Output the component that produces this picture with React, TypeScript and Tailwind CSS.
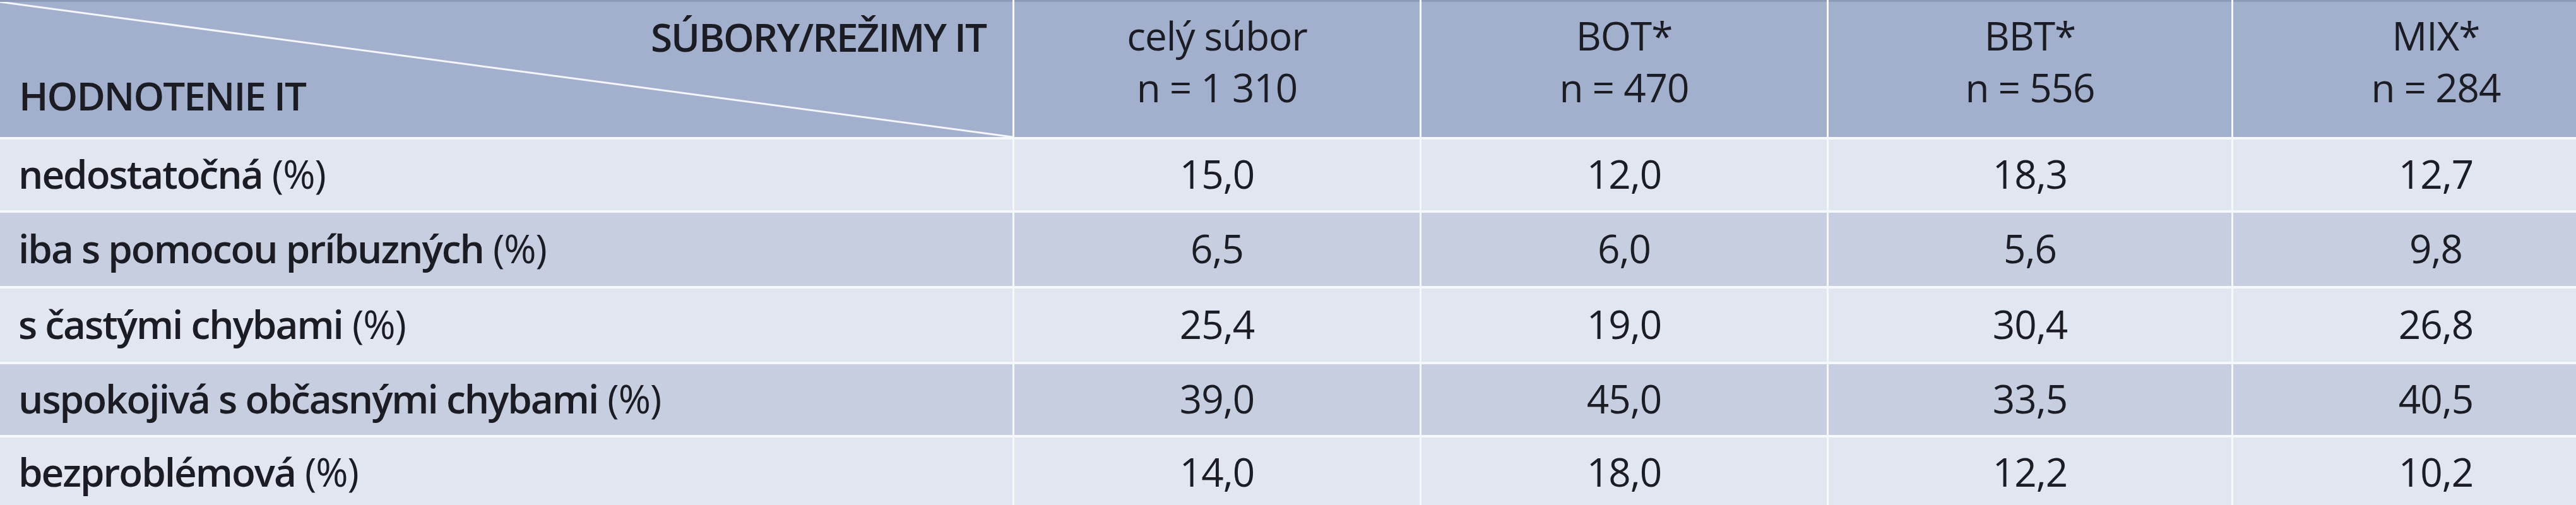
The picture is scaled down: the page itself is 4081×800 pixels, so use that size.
import React from 'react';

type Row = {
  label: string;
  values: string[];
};

const columns = [
  { title: 'celý súbor', n: 'n = 1 310' },
  { title: 'BOT*', n: 'n = 470' },
  { title: 'BBT*', n: 'n = 556' },
  { title: 'MIX*', n: 'n = 284' },
];

const rows: Row[] = [
  { label: 'nedostatočná', values: ['15,0', '12,0', '18,3', '12,7'] },
  { label: 'iba s pomocou príbuzných', values: ['6,5', '6,0', '5,6', '9,8'] },
  { label: 's častými chybami', values: ['25,4', '19,0', '30,4', '26,8'] },
  { label: 'uspokojivá s občasnými chybami', values: ['39,0', '45,0', '33,5', '40,5'] },
  { label: 'bezproblémová', values: ['14,0', '18,0', '12,2', '10,2'] },
];

export default function App() {
  return (
    <div className="w-[4081px] h-[800px] overflow-hidden bg-[#f7f8fc] font-['Open_Sans','Noto_Sans',sans-serif] text-[62px] tracking-[-1px] text-[#1b1c24]">
      <div className="grid w-[4180px] grid-cols-[1604px_642px_642px_638px_642px] grid-rows-[217px_112px_116px_116px_112px_112px] gap-x-[3px] gap-y-[4px]">
        {/* header */}
        <div className="relative flex flex-col justify-between border-t-[3px] border-[#8d9ab8] bg-[#a3b0cd] pt-[24px] pb-[35px] leading-none">
          <svg
            className="absolute inset-0 h-full w-full"
            viewBox="0 0 100 100"
            preserveAspectRatio="none"
          >
            <line
              x1="0"
              y1="0"
              x2="100"
              y2="100"
              stroke="#f4f6fb"
              strokeWidth="3"
              vectorEffect="non-scaling-stroke"
            />
          </svg>
          <div className="relative pr-[42px] text-right font-semibold tracking-[-2px]">SÚBORY/REŽIMY IT</div>
          <div className="relative pl-[30px] font-semibold tracking-[-2px]">HODNOTENIE IT</div>
        </div>
        {columns.map((col) => (
          <div
            key={col.title}
            className="border-t-[3px] border-[#8d9ab8] bg-[#a3b0cd] pt-[12px] text-center leading-[82px]"
          >
            <div>{col.title}</div>
            <div>{col.n}</div>
          </div>
        ))}

        {/* body */}
        {rows.map((row, i) => {
          const bg = i % 2 === 0 ? 'bg-[#e2e6f0]' : 'bg-[#c7cee0]';
          return (
            <React.Fragment key={row.label}>
              <div className={`flex items-center pl-[29px] pb-[4px] ${bg}`}>
                <span className="font-semibold tracking-[-2px]">{row.label}</span>
                <span>&nbsp;(%)</span>
              </div>
              {row.values.map((v, j) => (
                <div key={j} className={`flex items-center justify-center pb-[4px] ${bg}`}>
                  {v}
                </div>
              ))}
            </React.Fragment>
          );
        })}
      </div>
    </div>
  );
}
